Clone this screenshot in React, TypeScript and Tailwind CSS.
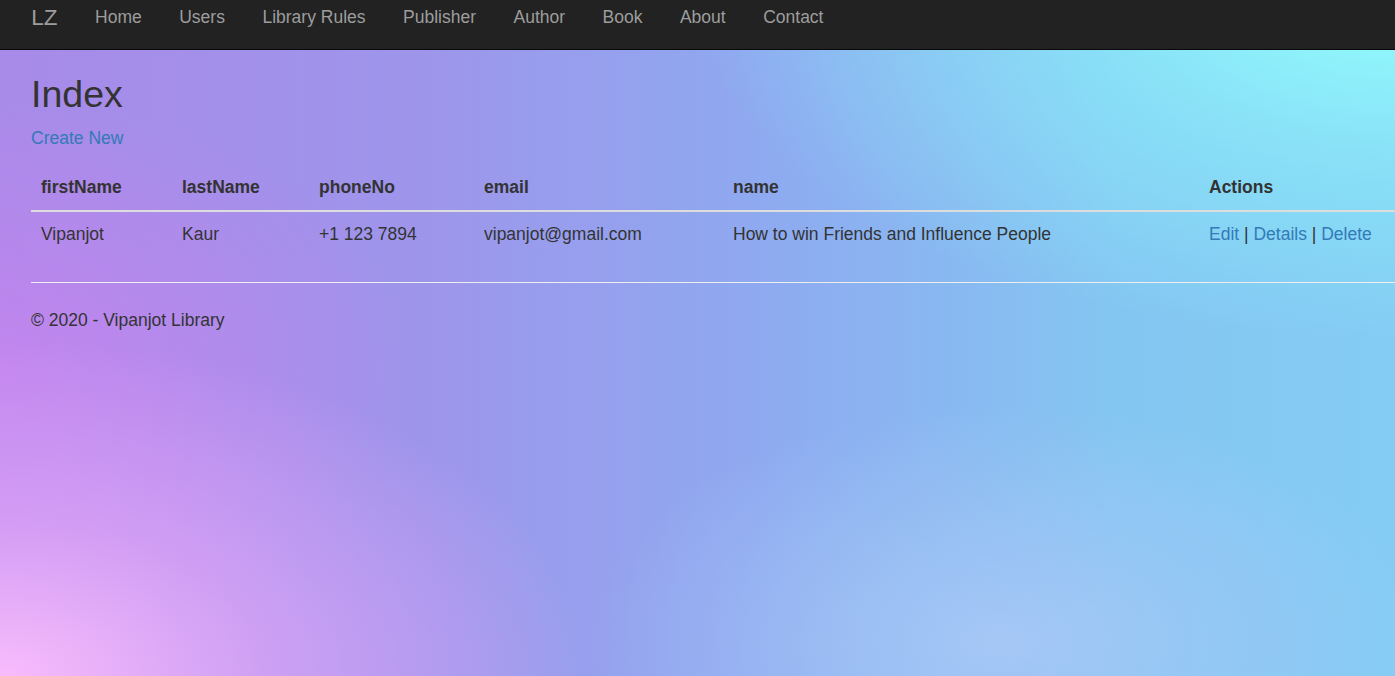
import React from "react";

const NAV_LINKS = ["Home", "Users", "Library Rules", "Publisher", "Author", "Book", "About", "Contact"];

const Navbar = () => {
  return (
    <nav className="h-[50px] border-b border-[#080808] bg-[#222222]">
      <div className="flex items-start pl-[12.5px] pt-[4.5px] leading-[25px]">
        <a className="px-[18.75px] text-[22.5px] text-[#9d9d9d]">LZ</a>
        {NAV_LINKS.map((link) => (
          <a key={link} className="px-[18.75px] text-[17.5px] text-[#9d9d9d]">
            {link}
          </a>
        ))}
      </div>
    </nav>
  );
};

const BooksTable = () => {
  return (
    <table className="w-[1400px] table-fixed border-collapse text-left">
      <thead>
        <tr>
          <th className="w-[141px] border-b-2 border-[#dddddd] p-[10px] font-bold">firstName</th>
          <th className="w-[137px] border-b-2 border-[#dddddd] p-[10px] font-bold">lastName</th>
          <th className="w-[165px] border-b-2 border-[#dddddd] p-[10px] font-bold">phoneNo</th>
          <th className="w-[249px] border-b-2 border-[#dddddd] p-[10px] font-bold">email</th>
          <th className="w-[476px] border-b-2 border-[#dddddd] p-[10px] font-bold">name</th>
          <th className="border-b-2 border-[#dddddd] p-[10px] font-bold">Actions</th>
        </tr>
      </thead>
      <tbody>
        <tr>
          <td className="p-[10px]">Vipanjot</td>
          <td className="p-[10px]">Kaur</td>
          <td className="p-[10px]">+1 123 7894</td>
          <td className="p-[10px]">vipanjot@gmail.com</td>
          <td className="p-[10px]">How to win Friends and Influence People</td>
          <td className="whitespace-nowrap p-[10px]">
            <a className="text-[#337ab7]">Edit</a> | <a className="text-[#337ab7]">Details</a> |{" "}
            <a className="text-[#337ab7]">Delete</a>
          </td>
        </tr>
      </tbody>
    </table>
  );
};

export default function App() {
  return (
    <div
      className="min-h-[676px] overflow-hidden bg-[radial-gradient(ellipse_50%_50%_at_100%_0%,#93fefd_0%,rgba(140,240,250,0.6)_45%,rgba(147,254,253,0)_100%),radial-gradient(ellipse_42%_50%_at_0%_100%,#f8bcfc_0%,rgba(235,170,250,0.6)_45%,rgba(248,188,252,0)_100%),radial-gradient(ellipse_30%_40%_at_0%_55%,rgba(200,132,240,0.8)_0%,rgba(200,132,240,0)_100%),radial-gradient(ellipse_30%_35%_at_72%_95%,rgba(168,200,246,0.9)_0%,rgba(168,200,246,0)_100%),linear-gradient(to_right,#a88ae9_0%,#9e95eb_30%,#8eaaf0_55%,#84c6f2_80%,#84ccf3_100%)] font-['Liberation_Sans',Arial,sans-serif] text-[17.5px] leading-[25px] text-[#333333]"
    >
      <Navbar />
      <div className="pl-[31px]">
        <h2 className="mt-[24px] mb-[11px] text-[37.5px] leading-[41.25px]">Index</h2>
        <p className="mb-[14px]">
          <a className="text-[#337ab7]">Create New</a>
        </p>
        <BooksTable />
        <hr className="mt-[25px] border-t border-[#eeeeee]" />
        <footer className="mt-[25px]">
          <p>© 2020 - Vipanjot Library</p>
        </footer>
      </div>
    </div>
  );
}
